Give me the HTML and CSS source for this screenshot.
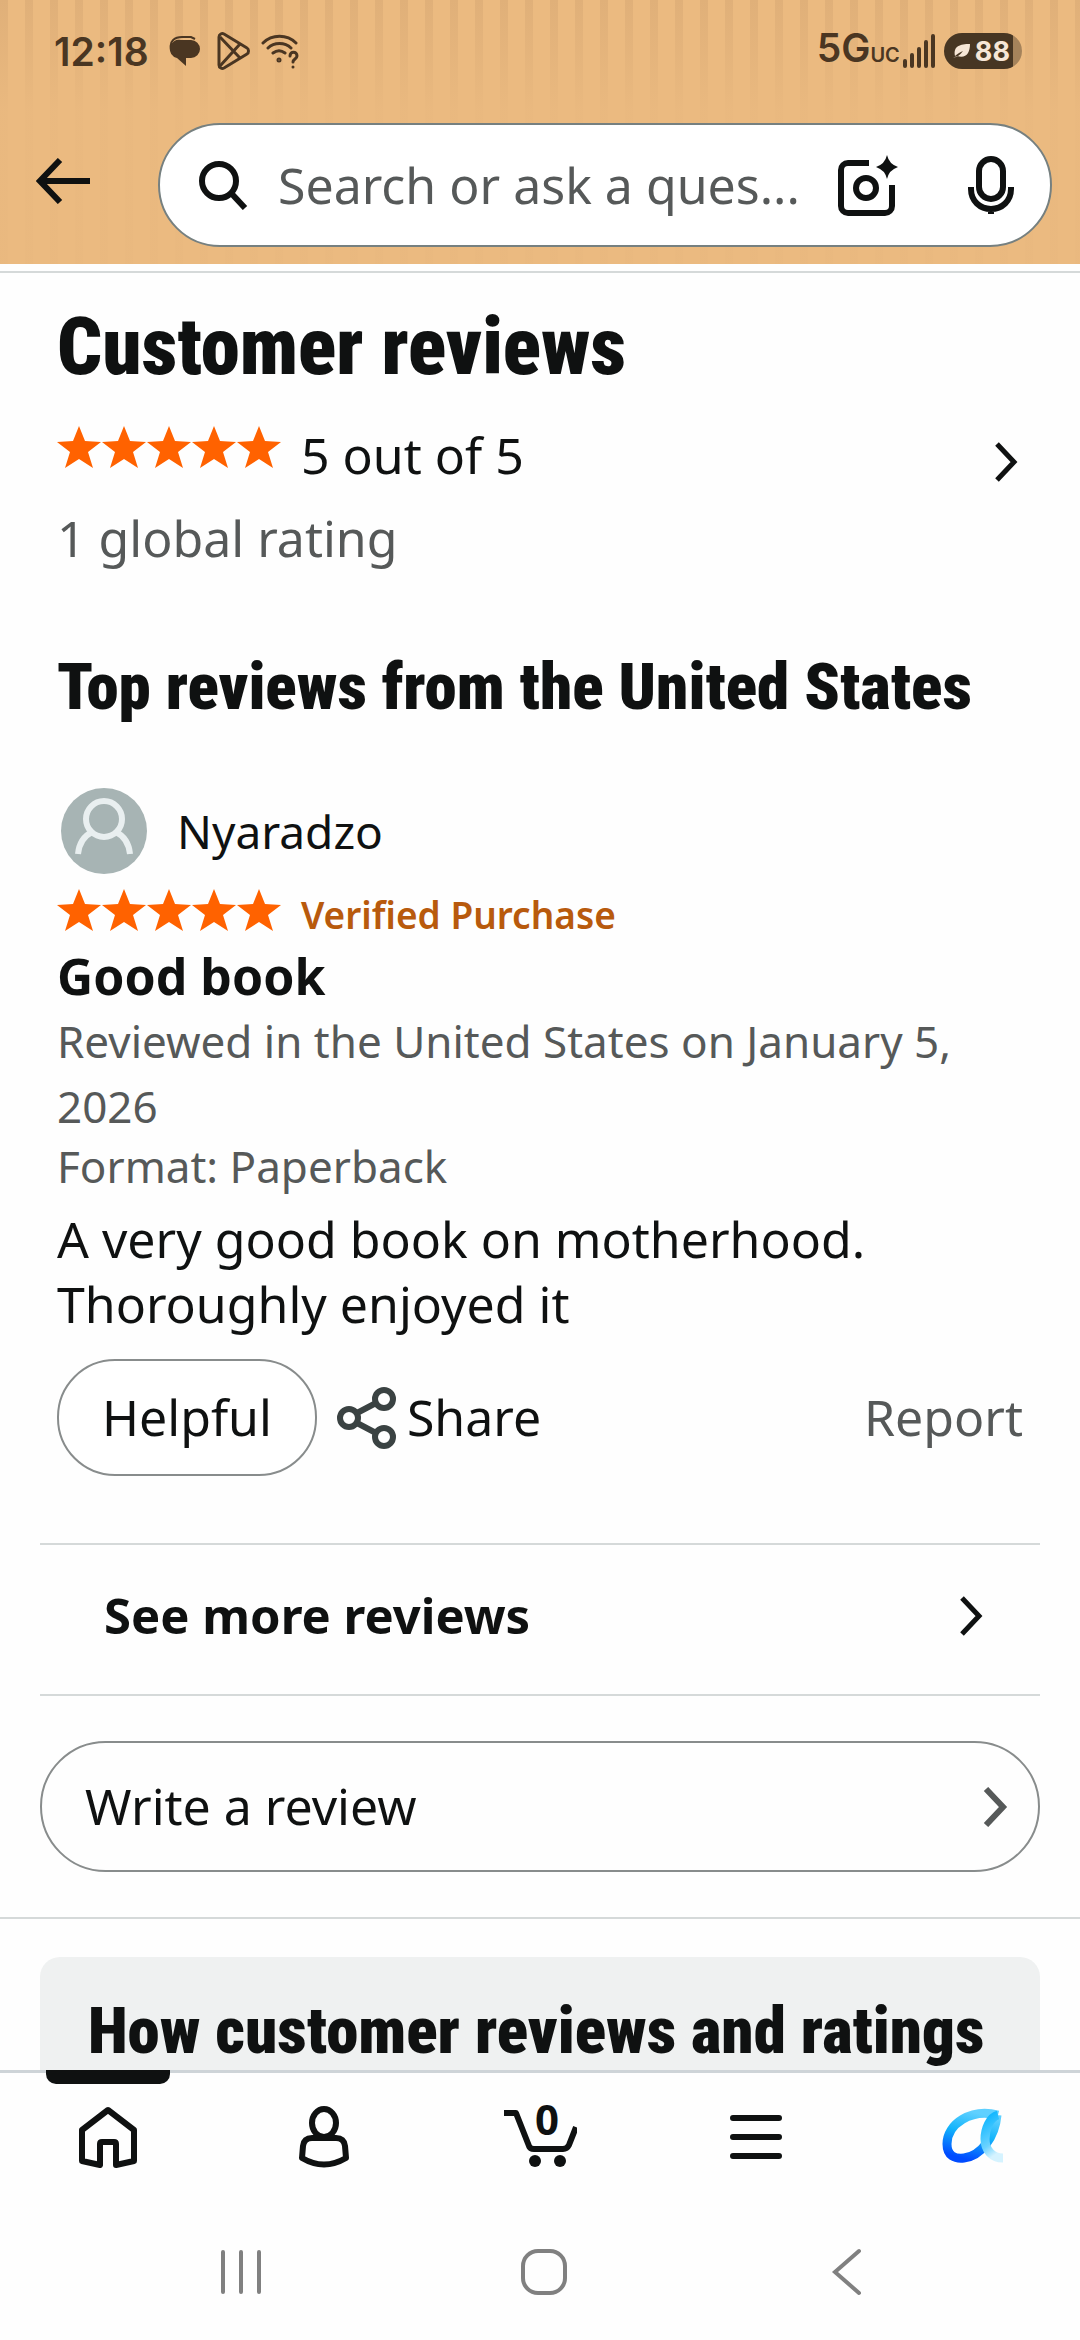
FILE: index.html
```html
<!DOCTYPE html>
<html lang="en">
<head>
    <meta charset="UTF-8">
    <title>Customer reviews</title>
    <meta name="viewport" content="width=device-width, initial-scale=1.0">
    <link rel="stylesheet" href="styles.css">
</head>
<body>
    <header class="top">
        <div class="status-bar">
            <span class="clock">12:18</span>
            <svg class="status-chat" width="32" height="32" viewBox="0 0 32 32">
                <path d="M2 14C0 6 6 2 13 2h9l4 2" fill="none" stroke="currentColor" stroke-width="2"/>
                <path d="M12 5h10a9 9 0 0 1 0 18h-5v8l-9-8a9 9 0 0 1 4-18z" fill="currentColor"/>
            </svg>
            <svg class="status-play" width="34" height="38" viewBox="0 0 34 38" fill="none" stroke="currentColor" stroke-width="3">
                <path d="M2 5v28c0 3 3 4 5 3l23-14c2-1 2-5 0-6L7 2C5 1 2 2 2 5z"/>
                <path d="M3 5l20 21M3 34l20-22"/>
            </svg>
            <svg class="status-wifi" width="38" height="36" viewBox="0 0 38 36" fill="none" stroke="currentColor" stroke-width="3" stroke-linecap="round">
                <path d="M2 10c9-9 24-9 33 0M7 15c6-6 17-6 23 0M12 20c4-3 8-3 12 0"/>
                <circle cx="18" cy="27" r="1"/>
                <path d="M29 23c0-5 7-5 7 0 0 3-4 3-4 6M32 34v0"/>
            </svg>
            <span class="network">5G<small>UC</small></span>
            <svg class="status-signal" width="33" height="34" viewBox="0 0 33 34" stroke="currentColor" stroke-width="4" stroke-linecap="round">
                <path d="M2 27v5M9 21v11M16 15v17M23 8v24M30 2v30"/>
            </svg>
            <span class="battery">
                <svg width="19" height="16" viewBox="0 0 19 16">
                    <path d="M1 15c4-1 7-3 10-7-4 2-6 3-8 5C1 3 8 1 18 1c0 9-4 15-13 12" fill="currentColor"/>
                </svg>
                88
            </span>
        </div>
        <form class="search-row">
            <button class="icon-btn back" type="button" aria-label="Back">
                <svg width="54" height="46" viewBox="0 0 54 46" fill="none" stroke="currentColor" stroke-width="6">
                    <path d="M24 2L4 23l20 21M3 23h51"/>
                </svg>
            </button>
            <div class="search-box">
                <svg width="50" height="50" viewBox="0 0 50 50" fill="none" stroke="currentColor" stroke-width="6">
                    <circle cx="21" cy="21" r="17"/>
                    <path d="M33 33l14 15"/>
                </svg>
                <input class="search-input" type="text" placeholder="Search or ask a ques..." aria-label="Search">
                <button class="icon-btn" type="button" aria-label="Camera search">
                    <svg width="60" height="62" viewBox="0 0 60 62" fill="none" stroke="currentColor" stroke-width="6">
                        <path d="M31 9H10a7 7 0 0 0-7 7v36a7 7 0 0 0 7 7h37a7 7 0 0 0 7-7V31"/>
                        <circle cx="28" cy="34" r="10"/>
                        <path d="M49 1q2 9 11 12q-9 3-11 12q-2-9-11-12q9-3 11-12z" fill="currentColor" stroke="none"/>
                    </svg>
                </button>
                <button class="icon-btn mic" type="button" aria-label="Voice search">
                    <svg width="46" height="58" viewBox="0 0 46 58" fill="none" stroke="currentColor" stroke-width="6">
                        <rect x="11" y="3" width="24" height="40" rx="12"/>
                        <path d="M3 31v2c0 12 9 20 20 20s20-8 20-20v-2M23 52v6"/>
                    </svg>
                </button>
            </div>
        </form>
    </header>

    <main class="content">
        <section class="reviews">
            <h1 class="title">Customer reviews</h1>
            <a class="summary" href="#">
                <span class="rating-row">
                    <svg class="stars" width="224" height="42" viewBox="0 0 224 42" role="img" aria-label="5 stars">
                        <defs>
                            <path id="star" d="M22 0l6 15 16 1-13 10 5 16-14-9-14 9 5-16L0 16l16-1z"/>
                        </defs>
                        <use href="#star"/><use href="#star" x="45"/><use href="#star" x="90"/><use href="#star" x="135"/><use href="#star" x="180"/>
                    </svg>
                    <span>5 out of 5</span>
                </span>
                <svg class="chevron" width="26" height="40" viewBox="0 0 26 40">
                    <path d="M4 2l17 18L4 38"/>
                </svg>
            </a>
            <p class="muted total">1 global rating</p>

            <h2 class="subtitle">Top reviews from the United States</h2>

            <article class="review">
                <div class="profile">
                    <svg width="86" height="86" viewBox="0 0 86 86" fill="none" stroke="#e9eff0" stroke-width="6">
                        <circle cx="43" cy="43" r="43" fill="#a7b4b4" stroke="none"/>
                        <circle cx="43" cy="31" r="18"/>
                        <path d="M17 66c1-10 6-18 14-22M69 66c-1-10-6-18-14-22"/>
                    </svg>
                    <span>Nyaradzo</span>
                </div>
                <div class="rating-row">
                    <svg class="stars" width="224" height="42" viewBox="0 0 224 42" role="img" aria-label="5 stars">
                        <use href="#star"/><use href="#star" x="45"/><use href="#star" x="90"/><use href="#star" x="135"/><use href="#star" x="180"/>
                    </svg>
                    <span class="verified">Verified Purchase</span>
                </div>
                <h3 class="review-title">Good book</h3>
                <p class="muted meta">Reviewed in the United States on January 5, 2026</p>
                <p class="muted meta format">Format: Paperback</p>
                <p class="review-text">A very good book on motherhood. Thoroughly enjoyed it</p>
                <div class="actions">
                    <button class="helpful" type="button">Helpful</button>
                    <button class="icon-btn share" type="button">
                        <svg width="60" height="62" viewBox="0 0 60 62" fill="none" stroke="#3a4242" stroke-width="6">
                            <circle cx="47" cy="12" r="9"/>
                            <circle cx="12" cy="31" r="9"/>
                            <circle cx="47" cy="50" r="9"/>
                            <path d="M20 26l19-10M20 36l19 10"/>
                        </svg>
                        Share
                    </button>
                    <a class="muted report" href="#">Report</a>
                </div>
            </article>
        </section>

        <a class="see-more" href="#">
            See more reviews
            <svg class="chevron" width="26" height="40" viewBox="0 0 26 40">
                <path d="M4 2l17 18L4 38"/>
            </svg>
        </a>
        <a class="write" href="#">
            Write a review
            <svg class="chevron grey" width="26" height="40" viewBox="0 0 26 40">
                <path d="M4 2l17 18L4 38"/>
            </svg>
        </a>
        <section class="how">
            <h2 class="how-title">How customer reviews and ratings</h2>
        </section>
    </main>

    <nav class="tabs">
        <a class="tab current" href="#" aria-label="Home">
            <svg width="60" height="62" viewBox="0 0 60 62" fill="none" stroke="currentColor" stroke-width="6" stroke-linejoin="round">
                <path d="M30 4L4 24v31l18 4V38q0-2 2-2h12q2 0 2 2v21l18-4V24z"/>
            </svg>
        </a>
        <a class="tab" href="#" aria-label="Account">
            <svg width="60" height="62" viewBox="0 0 60 62" fill="none" stroke="currentColor" stroke-width="6" stroke-linejoin="round">
                <ellipse cx="30" cy="17" rx="12" ry="14"/>
                <path d="M18 32h24q8 0 9 8l1 12q-22 13-44 0l1-12q1-8 9-8z"/>
            </svg>
        </a>
        <a class="tab" href="#" aria-label="Cart">
            <span class="cart-count">0</span>
            <svg width="74" height="62" viewBox="0 0 74 62" fill="none" stroke="currentColor" stroke-width="6" stroke-linejoin="round">
                <path d="M1 7h12l13 33q1 3 5 3h29q4 0 6-4l7-18"/>
                <circle cx="32" cy="55" r="6" fill="currentColor" stroke="none"/>
                <circle cx="57" cy="55" r="6" fill="currentColor" stroke="none"/>
            </svg>
        </a>
        <a class="tab" href="#" aria-label="Menu">
            <svg width="52" height="62" viewBox="0 0 52 62" stroke="currentColor" stroke-width="6" stroke-linecap="round">
                <path d="M3 12h46M3 31h46M3 50h46"/>
            </svg>
        </a>
        <a class="tab" href="#" aria-label="Assistant">
            <svg width="62" height="62" viewBox="0 0 62 62" fill="none" stroke-width="9">
                <defs>
                    <linearGradient id="loop" x1="0.6" y1="0" x2="0.3" y2="1">
                        <stop offset="0" stop-color="#5fd0ff"/>
                        <stop offset="0.45" stop-color="#12b4fb"/>
                        <stop offset="1" stop-color="#004bff"/>
                    </linearGradient>
                    <linearGradient id="tail" x1="0" y1="0" x2="0.3" y2="1">
                        <stop offset="0" stop-color="#08b4ff"/>
                        <stop offset="0.7" stop-color="#6bd3ff"/>
                        <stop offset="1" stop-color="#d5f3ff"/>
                    </linearGradient>
                </defs>
                <path d="M57 9C30 2 6 18 6 38c0 12 8 15 17 14 17-2 31-21 33-43" stroke="url(#loop)"/>
                <path d="M57 9C49 11 44 23 44 33c0 11 7 19 18 19" stroke="url(#tail)"/>
            </svg>
        </a>
    </nav>
    <div class="system-nav">
        <button class="icon-btn" type="button" aria-label="Recent apps">
            <svg width="46" height="48" viewBox="0 0 46 48" fill="none" stroke="currentColor" stroke-width="4" stroke-linecap="round">
                <path d="M5 4v40M23 4v40M41 4v40"/>
            </svg>
        </button>
        <button class="icon-btn" type="button" aria-label="Home screen">
            <svg width="46" height="48" viewBox="0 0 46 48" fill="none" stroke="currentColor" stroke-width="4">
                <rect x="2" y="3" width="42" height="42" rx="15"/>
            </svg>
        </button>
        <button class="icon-btn" type="button" aria-label="Go back">
            <svg width="46" height="48" viewBox="0 0 46 48" fill="none" stroke="currentColor" stroke-width="4" stroke-linecap="round">
                <path d="M35 3L11 24l24 21"/>
            </svg>
        </button>
    </div>
</body>
</html>
```
FILE: styles.css
```css
* {
    box-sizing: border-box;
}
body {
    margin: 0;
    height: 100vh;
    display: flex;
    flex-direction: column;
    background: #fefefe;
    color: #0f1111;
    font-family: 'Noto Sans', sans-serif;
    font-size: 50px;
    line-height: 65px;
}
h1, h2, h3, p {
    margin: 0;
}
a {
    color: inherit;
    text-decoration: none;
}
svg {
    display: block;
    flex-shrink: 0;
}
button {
    font: inherit;
    color: inherit;
    cursor: pointer;
}
.icon-btn {
    display: flex;
    align-items: center;
    padding: 0;
    border: none;
    background: none;
}

/* status bar and search */
.top {
    flex-shrink: 0;
    height: 264px;
    background:
        linear-gradient(#ebba8000 0, #ebba80e0 110px),
        repeating-linear-gradient(90deg, #e0b079 0 8px, #ebba80 8px 25px);
}
.status-bar {
    display: flex;
    align-items: center;
    height: 123px;
    padding: 0 58px 21px 54px;
    color: #4a3622;
    font-family: Inter, sans-serif;
    font-size: 39px;
    font-weight: 600;
}
.status-chat {
    margin-left: 20px;
}
.status-play {
    margin-left: 16px;
}
.status-wifi {
    margin-left: 10px;
}
.network {
    margin-left: auto;
}
.network small {
    font-size: 20px;
}
.status-signal {
    margin: 0 8px 0 3px;
}
.battery {
    display: flex;
    align-items: center;
    gap: 4px;
    height: 36px;
    padding: 0 12px 0 8px;
    border-radius: 18px;
    background: linear-gradient(90deg, #473623 88%, #a5835b 88%);
    color: #f6e6d6;
    font-size: 27px;
    font-weight: 700;
}
.search-row {
    display: flex;
    align-items: center;
    gap: 68px;
    padding: 0 28px 0 36px;
}
.back {
    padding-bottom: 8px;
}
.search-box {
    flex: 1;
    min-width: 0;
    display: flex;
    align-items: center;
    height: 124px;
    padding: 0 36px 0 38px;
    border: 2px solid #768080;
    border-radius: 62px;
    background: #fff;
}
.search-input {
    flex: 1;
    min-width: 0;
    margin: 0 0 0 30px;
    padding: 0;
    border: none;
    outline: none;
    background: none;
    font: inherit;
}
.search-input::placeholder {
    color: #565959;
    opacity: 1;
}
.mic {
    margin-left: 70px;
}

/* page content */
.content {
    flex: 1;
    min-height: 0;
    overflow: hidden;
    margin-top: 7px;
    border-top: 2px solid #d5d9d9;
}
.reviews {
    padding: 0 57px;
}
.title, .subtitle, .how-title {
    font-family: 'Roboto Condensed', Roboto, sans-serif;
    font-weight: 900;
}
.title {
    padding-top: 34px;
    font-size: 79px;
    line-height: 80px;
}
.subtitle {
    margin-top: 80px;
    font-size: 65px;
    line-height: 72px;
}
.muted {
    color: #565959;
}
.summary {
    display: flex;
    align-items: center;
    justify-content: space-between;
    margin-top: 36px;
    padding-right: 4px;
}
.summary .chevron {
    margin-top: 12px;
}
.rating-row {
    display: flex;
    align-items: flex-start;
    gap: 20px;
}
.stars {
    margin-top: 3px;
    fill: #ff6200;
}
.chevron {
    fill: none;
    stroke: currentColor;
    stroke-width: 5;
}
.chevron.grey {
    color: #565959;
    stroke-width: 6;
}
.total {
    margin-top: 18px;
}
.profile {
    display: flex;
    align-items: center;
    gap: 30px;
    margin: 65px 0 12px 4px;
    font-size: 46px;
}
.verified {
    color: #b85a0d;
    font-size: 37px;
    font-weight: 600;
    line-height: 58px;
}
.review-title {
    font-size: 50px;
    font-weight: 700;
}
.meta {
    font-size: 44px;
}
.format {
    line-height: 54px;
}
.review-text {
    margin-top: 14px;
}
.actions {
    display: flex;
    align-items: center;
    margin-top: 22px;
}
.helpful {
    height: 117px;
    padding: 0 43px;
    border: 2px solid #888c8c;
    border-radius: 58px;
    background: #fff;
}
.share {
    gap: 10px;
    margin-left: 20px;
}
.report {
    margin-left: auto;
}
.see-more {
    display: flex;
    align-items: center;
    justify-content: space-between;
    height: 153px;
    margin: 67px 40px 0;
    padding: 0 56px 8px 64px;
    border-top: 2px solid #d5d9d9;
    border-bottom: 2px solid #d5d9d9;
    font-size: 49px;
    font-weight: 700;
}
.write {
    display: flex;
    align-items: center;
    justify-content: space-between;
    height: 131px;
    margin: 45px 40px;
    padding: 0 30px 0 43px;
    border: 2px solid #888c8c;
    border-radius: 66px;
}
.how {
    padding: 38px 40px 0;
    border-top: 2px solid #d5d9d9;
}
.how-title {
    padding: 38px 44px 38px 48px;
    border-radius: 20px 20px 0 0;
    background: #eff1f1;
    font-size: 65px;
    line-height: 72px;
}

/* bottom bars */
.tabs {
    flex-shrink: 0;
    display: flex;
    height: 134px;
    padding-bottom: 4px;
    border-top: 3px solid #ced4d8;
}
.tab {
    flex: 1;
    position: relative;
    display: flex;
    align-items: center;
    justify-content: center;
}
.tab.current::before {
    content: "";
    position: absolute;
    top: -3px;
    left: 46px;
    width: 124px;
    height: 14px;
    border-radius: 0 0 10px 10px;
    background: #0f1111;
}
.cart-count {
    position: absolute;
    top: 24px;
    left: calc(50% - 5px);
    font-size: 42px;
    font-weight: 700;
    line-height: 44px;
}
.system-nav {
    flex-shrink: 0;
    display: flex;
    justify-content: space-between;
    height: 136px;
    padding: 0 210px 0 218px;
    color: #808080;
}
```
